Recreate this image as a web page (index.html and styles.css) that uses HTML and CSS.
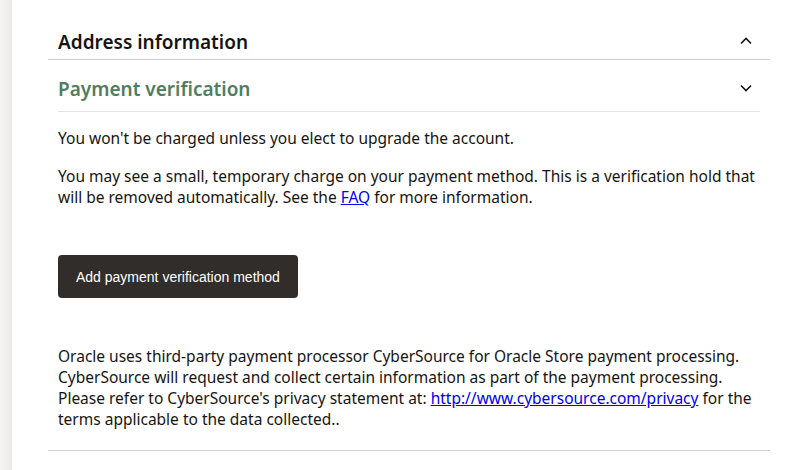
FILE: index.html
```html
<!DOCTYPE html>
<html>
<head>
<meta charset="utf-8">
<link rel="stylesheet" href="styles.css">
</head>
<body>
<div class="page">
  <div class="rail"></div>
  <main class="content">
    <section class="section">
      <div class="section-head outer">
        <h2 class="title">Address information</h2>
        <svg class="chev" width="12" height="8" viewBox="0 0 12 8"><path d="M1 6.5 L6 1.5 L11 6.5" fill="none" stroke="#161513" stroke-width="1.6"/></svg>
      </div>
    </section>
    <section class="section inner">
      <div class="section-head sub">
        <h2 class="title green">Payment verification</h2>
        <svg class="chev" width="12" height="8" viewBox="0 0 12 8"><path d="M1 1.5 L6 6.5 L11 1.5" fill="none" stroke="#161513" stroke-width="1.6"/></svg>
      </div>
      <div class="body">
        <p class="p">You won't be charged unless you elect to upgrade the account.</p>
        <p class="p">You may see a small, temporary charge on your payment method. This is a verification hold that<br>will be removed automatically. See the <a href="#" class="link">FAQ</a> for more information.</p>
        <button class="btn">Add payment verification method</button>
        <p class="p legal">Oracle uses third-party payment processor CyberSource for Oracle Store payment processing.<br>CyberSource will request and collect certain information as part of the payment processing.<br>Please refer to CyberSource's privacy statement at: <a href="#" class="link">http://www.cybersource.com/privacy</a> for the<br>terms applicable to the data collected..</p>
      </div>
    </section>
    <div class="rule"></div>
  </main>
</div>
</body>
</html>
```
FILE: styles.css
```css
* { box-sizing: border-box; }
html, body { margin: 0; padding: 0; background: #fff; }
body { font-family: "Noto Sans", "Open Sans", sans-serif; color: #161513; }
.page { display: flex; min-height: 470px; }
.rail { width: 12px; flex: none; background: linear-gradient(to right, #f5f4f2, #ebe9e6); }
.content { flex: 1; padding: 0 28px 0 36px; }
.section-head { display: flex; align-items: center; justify-content: space-between; }
.outer { height: 60px; padding: 28px 18px 0 10px; border-bottom: 1px solid #d0cfcd; align-items: flex-start; }
.inner { padding: 0 10px; }
.sub { height: 52px; padding-top: 15px; padding-right: 8px; border-bottom: 1px solid #e4e3e1; align-items: flex-start; }
.title { margin: 0; font-size: 19px; font-weight: 600; line-height: 28px; }
.green { color: #4f7d5f; }
.chev { margin-top: 9px; }
.body { padding-top: 16px; margin-right: -10px; }
.p { margin: 0 0 17px; font-size: 15.5px; line-height: 21px; white-space: nowrap; }
.link { color: #0000ee; text-decoration: underline; }
.btn { display: block; margin: 47px 0 48px; height: 43px; padding: 0 18px; border: none; border-radius: 4px; background: #312d2a; color: #fff; font-family: "Liberation Sans", Arial, sans-serif; font-size: 14px; }
.legal { margin: 0; }
.rule { margin-top: 20px; border-top: 1px solid #d0cfcd; }
```
